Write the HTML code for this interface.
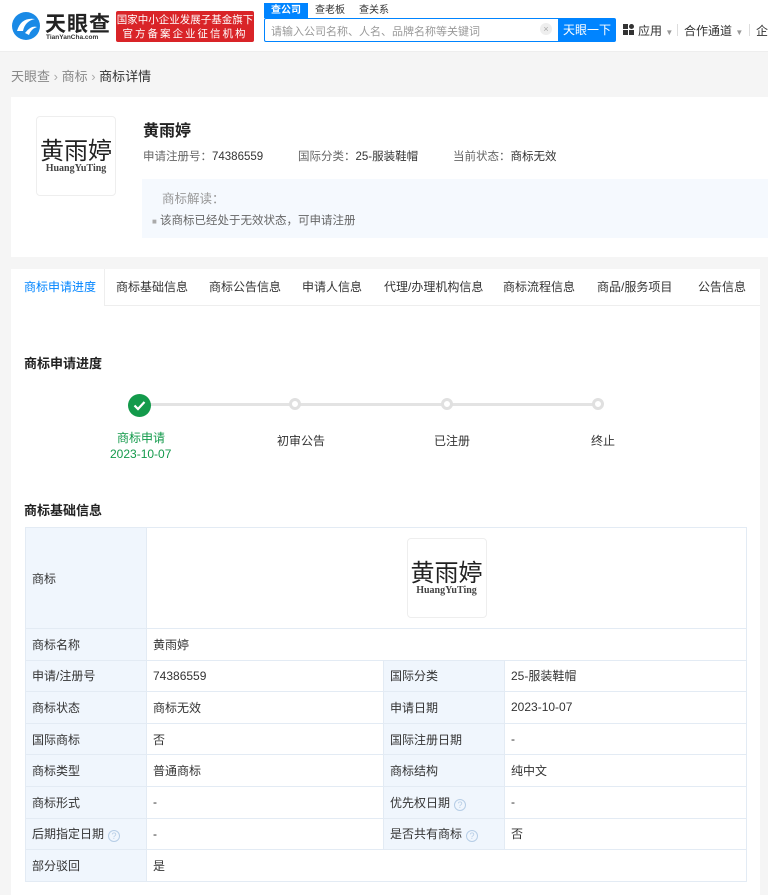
<!DOCTYPE html>
<html><head><meta charset="utf-8"><style>
*{box-sizing:border-box;margin:0;padding:0}
body{width:768px;height:895px;overflow:hidden;background:#f5f5f5;font-family:"Liberation Sans","Noto Sans CJK SC",sans-serif;font-size:12px;color:#333;position:relative}
.abs{position:absolute}
.hdr{left:0;top:0;width:768px;height:52px;background:#fff;border-bottom:1px solid #eee}
.tm{border:1px solid #eee;border-radius:4px;background:#fff;text-align:center}
.tm .c{font-family:"Noto Sans CJK SC",sans-serif;font-size:24px;line-height:28px;margin-top:18px;color:#222}
.tm .e{font-family:"Liberation Serif",serif;font-size:10px;color:#444;font-weight:bold}
table{border-collapse:collapse;position:absolute;left:25px;top:527px;width:722px}
td{border:1px solid #e3ebf4;height:31.6px;padding:0 6px;font-size:12px;color:#333}
td.k{background:#f0f6fd;width:121px}
td.k2{background:#f0f6fd;width:121px}
.q{display:inline-block;width:12px;height:12px;border:1px solid #b6cde6;border-radius:50%;color:#b6cde6;font-size:9px;line-height:10px;text-align:center;vertical-align:-1px;margin-left:4px}
.tab{position:absolute;top:269px;height:36px;line-height:36px;font-size:12px;color:#333}
</style></head><body>
<div class="abs hdr">
  <svg class="abs" style="left:11px;top:11px" width="30" height="30" viewBox="0 0 30 30"><circle cx="15" cy="15" r="14" fill="#1a8ae6"/><path d="M6 20 Q10 6 24 8 Q14 10 12 20 Z" fill="#fff"/><path d="M14 22 Q20 14 26 16 Q20 18 18 24 Z" fill="#fff"/></svg>
  <div class="abs" style="left:45px;top:8px;font-size:21px;font-weight:bold;color:#222;letter-spacing:1px">天眼查</div>
  <div class="abs" style="left:46px;top:34px;font-size:6.5px;color:#333;font-weight:bold">TianYanCha.com</div>
  <div class="abs" style="left:116px;top:11px;width:138px;height:31px;background:#d92428;border-radius:2px;color:#fff;font-size:10.5px;line-height:14px;text-align:center;padding-top:2px">国家中小企业发展子基金旗下<br><span style="letter-spacing:2px">官方备案企业征信机构</span></div>
  <div class="abs" style="left:264px;top:3px;width:44px;height:15px;background:#0084ff;color:#fff;font-size:10px;line-height:15px;text-align:center;font-weight:bold">查公司</div>
  <div class="abs" style="left:315px;top:3px;font-size:10px;color:#333;line-height:15px">查老板</div>
  <div class="abs" style="left:359px;top:3px;font-size:10px;color:#333;line-height:15px">查关系</div>
  <div class="abs" style="left:264px;top:18px;width:295px;height:24px;border:1px solid #0084ff;border-right:none;background:#fff;border-radius:2px 0 0 2px"></div>
  <div class="abs" style="left:271px;top:23px;font-size:11px;color:#999">请输入公司名称、人名、品牌名称等关键词</div>
  <div class="abs" style="left:540px;top:23px;width:12px;height:12px;border-radius:50%;background:#eee;color:#aaa;font-size:9px;line-height:12px;text-align:center">×</div>
  <div class="abs" style="left:558px;top:18px;width:58px;height:24px;background:#0084ff;color:#fff;font-size:12px;line-height:24px;text-align:center;border-radius:0 2px 2px 0">天眼一下</div>
  <svg class="abs" style="left:623px;top:24px" width="11" height="11"><rect x="0" y="0" width="5" height="5" fill="#333"/><rect x="6" y="0" width="5" height="5" rx="2.5" fill="#333"/><rect x="0" y="6" width="5" height="5" fill="#333"/><rect x="6" y="6" width="5" height="5" fill="#333"/></svg>
  <div class="abs" style="left:638px;top:22px;font-size:12px;color:#333">应用 <span style="color:#999;font-size:8px">▼</span></div>
  <div class="abs" style="left:677px;top:24px;width:1px;height:12px;background:#ddd"></div>
  <div class="abs" style="left:684px;top:22px;font-size:12px;color:#333">合作通道 <span style="color:#999;font-size:8px">▼</span></div>
  <div class="abs" style="left:749px;top:24px;width:1px;height:12px;background:#ddd"></div>
  <div class="abs" style="left:756px;top:22px;font-size:12px;color:#333">企</div>
</div>
<div class="abs" style="left:11px;top:66px;font-size:13px;color:#888">天眼查 <span style="color:#aaa">›</span> 商标 <span style="color:#aaa">›</span> <span style="color:#333">商标详情</span></div>

<div class="abs" style="left:11px;top:97px;width:770px;height:160px;background:#fff"></div>
<div class="abs tm" style="left:36px;top:116px;width:80px;height:80px"><div class="c">黄雨婷</div><div class="e">HuangYuTing</div></div>
<div class="abs" style="left:143px;top:117px;font-size:16px;font-weight:bold;color:#222">黄雨婷</div>
<div class="abs" style="left:143px;top:148px;color:#666;font-size:11.5px">申请注册号：<span style="color:#333">74386559</span></div>
<div class="abs" style="left:298px;top:148px;color:#666;font-size:11.5px">国际分类：<span style="color:#333">25-服装鞋帽</span></div>
<div class="abs" style="left:453px;top:148px;color:#666;font-size:11.5px">当前状态：<span style="color:#333">商标无效</span></div>
<div class="abs" style="left:142px;top:179px;width:630px;height:59px;background:#f5f9fe"></div>
<div class="abs" style="left:162px;top:188px;color:#999;font-size:12.5px">商标解读：</div>
<div class="abs" style="left:152px;top:212px;color:#666;font-size:11.5px"><span style="color:#aaa;font-size:8px">■</span> 该商标已经处于无效状态，可申请注册</div>

<div class="abs" style="left:11px;top:269px;width:749px;height:626px;background:#fff"></div>
<div class="abs" style="left:11px;top:305px;width:749px;height:1px;background:#eee"></div>
<div class="abs" style="left:11px;top:269px;width:94px;height:37px;background:#fff;border-right:1px solid #eee"></div>
<div class="tab" style="left:24px;color:#0084ff">商标申请进度</div>
<div class="tab" style="left:116px">商标基础信息</div>
<div class="tab" style="left:209px">商标公告信息</div>
<div class="tab" style="left:302px">申请人信息</div>
<div class="tab" style="left:384px">代理/办理机构信息</div>
<div class="tab" style="left:503px">商标流程信息</div>
<div class="tab" style="left:597px">商品/服务项目</div>
<div class="tab" style="left:698px">公告信息</div>

<div class="abs" style="left:24px;top:353px;font-size:13px;font-weight:bold;color:#222">商标申请进度</div>
<div class="abs" style="left:140px;top:403px;width:458px;height:3px;background:#e3e3e3"></div>
<div class="abs" style="left:128px;top:394px;width:23px;height:23px;border-radius:50%;background:#139a4b"></div>
<svg class="abs" style="left:133px;top:400px" width="13" height="11"><path d="M1.5 5.5 L5 9 L11.5 2" stroke="#fff" stroke-width="2.2" fill="none"/></svg>
<div class="abs" style="left:289px;top:398px;width:12px;height:12px;border-radius:50%;border:3px solid #e0e0e0;background:#fff"></div>
<div class="abs" style="left:441px;top:398px;width:12px;height:12px;border-radius:50%;border:3px solid #e0e0e0;background:#fff"></div>
<div class="abs" style="left:592px;top:398px;width:12px;height:12px;border-radius:50%;border:3px solid #e0e0e0;background:#fff"></div>
<div class="abs" style="left:117px;top:429px;color:#139a4b">商标申请</div>
<div class="abs" style="left:110px;top:447px;color:#139a4b">2023-10-07</div>
<div class="abs" style="left:277px;top:432px">初审公告</div>
<div class="abs" style="left:434px;top:432px">已注册</div>
<div class="abs" style="left:591px;top:432px">终止</div>

<div class="abs" style="left:24px;top:500px;font-size:13px;font-weight:bold;color:#222">商标基础信息</div>
<table>
<tr><td class="k" style="height:101px">商标</td><td colspan="3"><div class="tm" style="width:80px;height:80px;margin:0 auto"><div class="c">黄雨婷</div><div class="e">HuangYuTing</div></div></td></tr>
<tr><td class="k">商标名称</td><td colspan="3">黄雨婷</td></tr>
<tr><td class="k">申请/注册号</td><td style="width:237px">74386559</td><td class="k2">国际分类</td><td>25-服装鞋帽</td></tr>
<tr><td class="k">商标状态</td><td>商标无效</td><td class="k2">申请日期</td><td>2023-10-07</td></tr>
<tr><td class="k">国际商标</td><td>否</td><td class="k2">国际注册日期</td><td>-</td></tr>
<tr><td class="k">商标类型</td><td>普通商标</td><td class="k2">商标结构</td><td>纯中文</td></tr>
<tr><td class="k">商标形式</td><td>-</td><td class="k2">优先权日期<span class="q">?</span></td><td>-</td></tr>
<tr><td class="k">后期指定日期<span class="q">?</span></td><td>-</td><td class="k2">是否共有商标<span class="q">?</span></td><td>否</td></tr>
<tr><td class="k">部分驳回</td><td colspan="3">是</td></tr>
</table>
</body></html>
